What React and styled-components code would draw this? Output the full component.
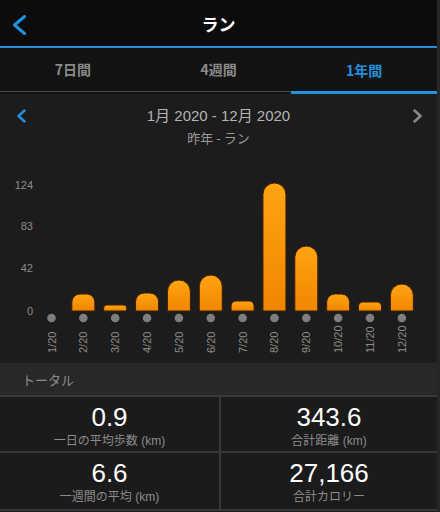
import React from "react";
import styled, { createGlobalStyle } from "styled-components";

const palette = {
  blue: "#2490dc",
  header: "#0c0c0c",
  tabs: "#131313",
  panel: "#1c1c1c",
  section: "#282828",
  line: "#383838",
  cell: "#1b1b1b",
  text: "#ffffff",
  sub: "#8c8c8c",
  date: "#b4b4b4",
};

const months = [
  { label: "1/20", h: 0 },
  { label: "2/20", h: 17 },
  { label: "3/20", h: 6 },
  { label: "4/20", h: 18 },
  { label: "5/20", h: 31 },
  { label: "6/20", h: 36 },
  { label: "7/20", h: 10 },
  { label: "8/20", h: 128 },
  { label: "9/20", h: 65 },
  { label: "10/20", h: 17 },
  { label: "11/20", h: 9 },
  { label: "12/20", h: 27 },
];

const totals = [
  { value: "0.9", label: "一日の平均歩数 (km)" },
  { value: "343.6", label: "合計距離 (km)" },
  { value: "6.6", label: "一週間の平均 (km)" },
  { value: "27,166", label: "合計カロリー" },
];

const tabs = ["7日間", "4週間", "1年間"];

function Chevron({ dir = "left", color, w = 10, h = 16, stroke = 2.5 }) {
  const pts = dir === "left" ? `${w - 1.5},1.5 1.5,${h / 2} ${w - 1.5},${h - 1.5}` : `1.5,1.5 ${w - 1.5},${h / 2} 1.5,${h - 1.5}`;
  return (
    <svg width={w} height={h} viewBox={`0 0 ${w} ${h}`}>
      <polyline points={pts} fill="none" stroke={color} strokeWidth={stroke} strokeLinecap="round" strokeLinejoin="round" />
    </svg>
  );
}

function barPath(cx, base, h, w) {
  const x0 = cx - w / 2;
  const x1 = cx + w / 2;
  const top = base - h;
  const r = Math.min(w / 2, h * 0.48);
  return `M${x0},${base} L${x0},${top + r} A${r},${r} 0 0 1 ${x0 + r},${top} L${x1 - r},${top} A${r},${r} 0 0 1 ${x1},${top + r} L${x1},${base} Z`;
}

function Chart() {
  const base = 165;
  const ticks = [
    { v: "124", y: 39 },
    { v: "83", y: 80 },
    { v: "42", y: 122 },
    { v: "0", y: 165 },
  ];
  return (
    <ChartSvg width="437" height="217" viewBox="0 0 437 217">
      <defs>
        <linearGradient id="bar" x1="0" y1="0" x2="0" y2="1">
          <stop offset="0" stopColor="#ffa412" />
          <stop offset="1" stopColor="#f08600" />
        </linearGradient>
      </defs>
      {ticks.map((t) => (
        <text key={t.v} x="33" y={t.y} textAnchor="end" dominantBaseline="central" fill={palette.sub} fontSize="11">
          {t.v}
        </text>
      ))}
      {months.map((m, i) => {
        const cx = 51.5 + i * 31.85;
        return (
          <g key={m.label}>
            {m.h > 0 && <path d={barPath(cx, base, m.h, 23)} fill="url(#bar)" stroke="#3d1e00" strokeWidth="1" />}
            <circle cx={cx} cy="172" r="4.3" fill="#7e7e7e" />
            <text x={cx} y="207" transform={`rotate(-90 ${cx} 207)`} dominantBaseline="central" fill={palette.sub} fontSize="11">
              {m.label}
            </text>
          </g>
        );
      })}
    </ChartSvg>
  );
}

export default function App() {
  return (
    <>
      <GlobalStyle />
      <Screen>
        <Header>
          <BackButton>
            <Chevron color={palette.blue} w={13} h={20} stroke={3} />
          </BackButton>
          <Title>ラン</Title>
          <span />
        </Header>
        <TabBar>
          {tabs.map((t, i) => (
            <Tab key={t} $active={i === 2}>
              {t}
            </Tab>
          ))}
        </TabBar>
        <ChartPanel>
          <DateNav>
            <NavArrow>
              <Chevron color={palette.blue} w={9} h={14} stroke={2.5} />
            </NavArrow>
            <DateText>
              <DateTitle>1月 2020 - 12月 2020</DateTitle>
              <DateSub>昨年 - ラン</DateSub>
            </DateText>
            <NavArrow $right>
              <Chevron dir="right" color="#8a8a8a" w={9} h={14} stroke={2.5} />
            </NavArrow>
          </DateNav>
          <Chart />
        </ChartPanel>
        <SectionHeader>トータル</SectionHeader>
        <TotalsGrid>
          {totals.map((t) => (
            <TotalCell key={t.label}>
              <TotalValue>{t.value}</TotalValue>
              <TotalLabel>{t.label}</TotalLabel>
            </TotalCell>
          ))}
        </TotalsGrid>
      </Screen>
    </>
  );
}

const GlobalStyle = createGlobalStyle`
  body {
    margin: 0;
    background: ${palette.panel};
    font-family: "Liberation Sans", "Noto Sans CJK JP", sans-serif;
  }
  * {
    box-sizing: border-box;
  }
`;

const Screen = styled.div`
  width: 440px;
  height: 512px;
  overflow: hidden;
  display: flex;
  flex-direction: column;
  background: ${palette.panel};
  border-right: 3px solid #262626;
`;

const Header = styled.header`
  height: 48px;
  display: grid;
  grid-template-columns: 60px 1fr 60px;
  align-items: center;
  background: ${palette.header};
  border-bottom: 2px solid ${palette.blue};
`;

const BackButton = styled.div`
  display: flex;
  padding-left: 13px;
  padding-top: 4px;
`;

const Title = styled.h1`
  margin: 0;
  text-align: center;
  color: ${palette.text};
  font-size: 17px;
  font-weight: bold;
  font-family: "Noto Sans CJK JP", sans-serif;
`;

const TabBar = styled.nav`
  height: 46px;
  display: flex;
  align-items: flex-start;
  background: ${palette.tabs};
`;

const Tab = styled.div`
  flex: 1;
  height: ${(p) => (p.$active ? "46px" : "44px")};
  display: flex;
  align-items: center;
  justify-content: center;
  padding-bottom: ${(p) => (p.$active ? "0" : "1px")};
  font-size: 14px;
  font-weight: bold;
  font-family: "Noto Sans CJK JP", sans-serif;
  color: ${(p) => (p.$active ? palette.blue : "#8a8a8a")};
  border-bottom: ${(p) => (p.$active ? `3px solid ${palette.blue}` : "1px solid #4a4a4a")};
`;

const ChartPanel = styled.section`
  height: 269px;
  background: ${palette.panel};
  display: flex;
  flex-direction: column;
`;

const DateNav = styled.div`
  display: grid;
  grid-template-columns: 40px 1fr 40px;
  padding-top: 12px;
  height: 52px;
`;

const NavArrow = styled.div`
  display: flex;
  height: 20px;
  align-items: center;
  justify-content: ${(p) => (p.$right ? "flex-end" : "flex-start")};
  padding: ${(p) => (p.$right ? "0 15px 0 0" : "0 0 0 17px")};
`;

const DateText = styled.div`
  display: flex;
  flex-direction: column;
  align-items: center;
`;

const DateTitle = styled.div`
  line-height: 20px;
  font-size: 15px;
  color: ${palette.date};
`;

const DateSub = styled.div`
  line-height: 20px;
  margin-top: 2px;
  font-size: 13px;
  color: #9a9a9a;
  font-family: "Noto Sans CJK JP", sans-serif;
`;

const ChartSvg = styled.svg`
  display: block;
  font-family: "Liberation Sans", sans-serif;
`;

const SectionHeader = styled.div`
  height: 32px;
  display: flex;
  align-items: center;
  padding-left: 22px;
  background: ${palette.section};
  color: ${palette.sub};
  font-size: 13px;
  font-family: "Noto Sans CJK JP", sans-serif;
`;

const TotalsGrid = styled.div`
  display: grid;
  grid-template-columns: 219px 1fr;
  grid-template-rows: 54px 56px;
  gap: 2px;
  padding: 2px 0;
  background: ${palette.line};
`;

const TotalCell = styled.div`
  display: flex;
  flex-direction: column;
  align-items: center;
  padding-top: 6px;
  background: ${palette.cell};
`;

const TotalValue = styled.div`
  font-size: 26px;
  line-height: 28px;
  color: ${palette.text};
`;

const TotalLabel = styled.div`
  margin-top: 2px;
  font-size: 12px;
  line-height: 16px;
  color: ${palette.sub};
`;
